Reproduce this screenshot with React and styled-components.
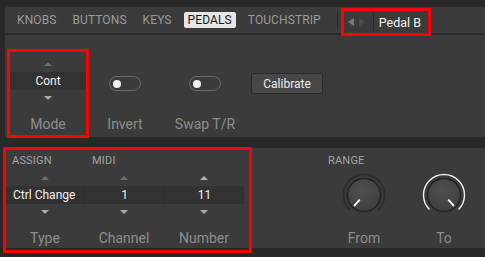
import React from 'react';
import styled, { createGlobalStyle } from 'styled-components';

const GlobalStyle = createGlobalStyle`
  html, body {
    margin: 0;
    padding: 0;
    background: #282828;
  }
  body {
    width: 485px;
    height: 257px;
    overflow: hidden;
    font-family: Roboto, "Liberation Sans", sans-serif;
  }
`;

const Page = styled.div`
  padding: 7px 0 0 5px;
  display: flex;
  flex-direction: column;
  gap: 11px;
`;

const Panel = styled.section`
  background: #3b3b3b;
  border-radius: ${p => (p.$top ? '3px 0 0 0' : '0')};
`;

const TabBar = styled.nav`
  height: 26px;
  display: flex;
  align-items: center;
  padding-left: 8px;
  border-bottom: 2px solid #2c2c2c;
`;

const Tabs = styled.div`
  display: flex;
  gap: 8px;
`;

const Tab = styled.span`
  height: 16px;
  line-height: 16px;
  padding: 0 4px;
  border-radius: 2px;
  font-size: 12px;
  letter-spacing: 0.1px;
  background: ${p => (p.$active ? '#e6e6e6' : 'transparent')};
  color: ${p => (p.$active ? '#161616' : '#9a9a9a')};
`;

const Divider = styled.span`
  width: 1px;
  height: 18px;
  background: #2a2a2a;
  margin: 0 ${p => p.$right || 0}px 0 ${p => p.$left || 0}px;
`;

const NavGroup = styled.div`
  align-self: flex-end;
  width: 84px;
  height: 22px;
  box-sizing: border-box;
  display: flex;
  align-items: center;
  padding-left: 4px;
  outline: 3px solid #ff0000;
`;

const NavArrow = styled.span`
  width: 0;
  height: 0;
  border-top: 4px solid transparent;
  border-bottom: 4px solid transparent;
  ${p =>
    p.$dir === 'left'
      ? `border-right: 6px solid ${p.$c};`
      : `border-left: 6px solid ${p.$c}; margin-left: 5px;`}
`;

const PageName = styled.span`
  font-size: 12.5px;
  color: #f0f0f0;
`;

const Upper = styled.div`
  height: 102px;
  box-sizing: border-box;
  padding-top: 17px;
  display: flex;
  align-items: flex-start;
`;

const Lower = styled.div`
  height: 100px;
  box-sizing: border-box;
  padding-top: 2px;
  display: flex;
  align-items: flex-start;
`;

const Highlight = styled.div`
  display: flex;
  outline: 3px solid #ff0000;
  margin-left: ${p => p.$ml || 0}px;
  padding: ${p => p.$pad || '0'};
`;

const Group = styled.div`
  display: flex;
  margin-left: ${p => p.$ml || 0}px;
`;

const Control = styled.div`
  width: ${p => p.$w}px;
  display: flex;
  flex-direction: column;
  padding-top: ${p => (p.$header ? 0 : 4)}px;
`;

const GroupTitle = styled.div`
  height: 12px;
  line-height: 12px;
  margin: 5px 0 3px;
  padding-left: ${p => p.$indent || 0}px;
  font-size: 11px;
  letter-spacing: 0.2px;
  color: #a3a3a3;
`;

const ArrowSlot = styled.div`
  height: 16px;
  display: flex;
  align-items: center;
  justify-content: center;
`;

const Arrow = styled.span`
  width: 0;
  height: 0;
  border-left: 4px solid transparent;
  border-right: 4px solid transparent;
  ${p =>
    p.$dir === 'up'
      ? `border-bottom: 4px solid ${p.$c};`
      : `border-top: 4px solid ${p.$c};`}
`;

const Value = styled.div`
  height: 18px;
  box-sizing: border-box;
  display: flex;
  align-items: center;
  justify-content: ${p => (p.$left ? 'flex-start' : 'center')};
  padding-left: ${p => (p.$left ? 7 : 0)}px;
  background: #323232;
  border-left: ${p => (p.$sep ? '1px solid #2d2d2d' : 'none')};
  font-size: 12px;
  color: #f0f0f0;
`;

const Label = styled.div`
  margin-top: 10px;
  height: 16px;
  line-height: 16px;
  text-align: center;
  font-size: 14px;
  color: #8d8d8d;
`;

const ToggleRow = styled.div`
  height: 18px;
  margin-top: 16px;
  margin-bottom: 16px;
  display: flex;
  justify-content: center;
  align-items: flex-start;
  padding-top: 4px;
  box-sizing: border-box;
  overflow: visible;
`;

const Toggle = styled.div`
  width: 32px;
  height: 15px;
  flex-shrink: 0;
  box-sizing: border-box;
  border: 1.5px solid #6b6b6b;
  border-radius: 8px;
  display: flex;
  align-items: center;
  padding-left: 3px;
  &::before {
    content: '';
    width: 8px;
    height: 8px;
    border-radius: 50%;
    background: #f2f2f2;
  }
`;

const Button = styled.button`
  margin: 21px 0 0 5px;
  width: 72px;
  height: 21px;
  padding: 0;
  background: #474747;
  border: 1px solid #2a2a2a;
  border-radius: 2px;
  font-family: inherit;
  font-size: 12px;
  color: #ececec;
`;

const KnobSlot = styled.div`
  height: 50px;
  display: flex;
  align-items: center;
  justify-content: center;
`;

const pt = (a, r) => {
  const rad = (a * Math.PI) / 180;
  return [23 + r * Math.sin(rad), 23 - r * Math.cos(rad)];
};

const Knob = ({ angle, active }) => {
  const [sx, sy] = pt(225, 20.5);
  const [ex, ey] = pt(135, 20.5);
  const [ix, iy] = pt(angle, 7);
  const [ox, oy] = pt(angle, 14);
  const arc = `M ${sx} ${sy} A 20.5 20.5 0 1 1 ${ex} ${ey}`;
  return (
    <svg width="46" height="46" viewBox="0 0 46 46">
      <defs>
        <radialGradient id="kb" cx="0.45" cy="0.35" r="0.7">
          <stop offset="0" stopColor="#4f4f4f" />
          <stop offset="1" stopColor="#3e3e3e" />
        </radialGradient>
      </defs>
      <path d={arc} fill="none" stroke="#2e2e2e" strokeWidth="2" />
      {active && <path d={arc} fill="none" stroke="#ececec" strokeWidth="1.5" />}
      <circle cx="23" cy="23" r="16.5" fill="url(#kb)" stroke="#222" strokeWidth="1.5" />
      <line x1={ix} y1={iy} x2={ox} y2={oy} stroke="#f4f4f4" strokeWidth="2" strokeLinecap="round" />
    </svg>
  );
};

const Spinner = ({ value, left, sep, up = '#6e6e6e', down = '#a9a9a9' }) => (
  <>
    <ArrowSlot><Arrow $dir="up" $c={up} /></ArrowSlot>
    <Value $left={left} $sep={sep}>{value}</Value>
    <ArrowSlot><Arrow $dir="down" $c={down} /></ArrowSlot>
  </>
);

export default function App() {
  return (
    <>
      <GlobalStyle />
      <Page>
        <Panel $top>
          <TabBar>
            <Tabs>
              <Tab>KNOBS</Tab>
              <Tab>BUTTONS</Tab>
              <Tab>KEYS</Tab>
              <Tab $active>PEDALS</Tab>
              <Tab>TOUCHSTRIP</Tab>
            </Tabs>
            <Divider $left={12} $right={6} />
            <NavGroup>
              <NavArrow $dir="left" $c="#7a7a7a" />
              <NavArrow $dir="right" $c="#4e4e4e" />
              <Divider $left={8} $right={5} />
              <PageName>Pedal B</PageName>
            </NavGroup>
          </TabBar>
          <Upper>
            <Highlight $ml={5} $pad="0 0 3px 0">
              <Control $w={76}>
                <Spinner value="Cont" />
                <Label>Mode</Label>
              </Control>
            </Highlight>
            <Control $w={78}>
              <ToggleRow><Toggle /></ToggleRow>
              <Label>Invert</Label>
            </Control>
            <Control $w={82}>
              <ToggleRow><Toggle /></ToggleRow>
              <Label>Swap T/R</Label>
            </Control>
            <Button>Calibrate</Button>
          </Upper>
        </Panel>
        <Panel>
          <Lower>
            <Highlight $ml={1} $pad="0 5px 4px 0">
              <Control $w={78} $header>
                <GroupTitle $indent={6}>ASSIGN</GroupTitle>
                <Spinner value="Ctrl Change" left />
                <Label>Type</Label>
              </Control>
              <Control $w={80} $header>
                <GroupTitle $indent={8}>MIDI</GroupTitle>
                <Spinner value="1" sep />
                <Label>Channel</Label>
              </Control>
              <Control $w={80} $header>
                <GroupTitle />
                <Spinner value="11" sep up="#b4b4b4" />
                <Label>Number</Label>
              </Control>
            </Highlight>
            <Group $ml={75}>
              <Control $w={80} $header>
                <GroupTitle $indent={4}>RANGE</GroupTitle>
                <KnobSlot><Knob angle={222} /></KnobSlot>
                <Label>From</Label>
              </Control>
              <Control $w={80} $header>
                <GroupTitle />
                <KnobSlot><Knob angle={138} active /></KnobSlot>
                <Label>To</Label>
              </Control>
            </Group>
          </Lower>
        </Panel>
      </Page>
    </>
  );
}
